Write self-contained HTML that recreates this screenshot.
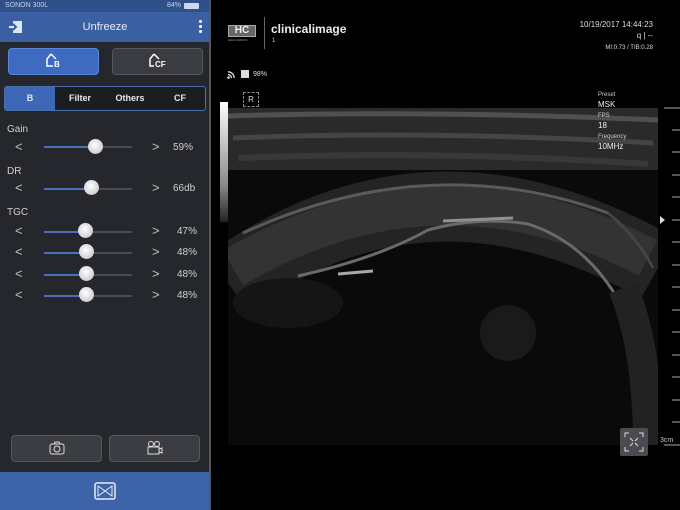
<!DOCTYPE html>
<html><head><meta charset="utf-8"><style>
*{margin:0;padding:0;box-sizing:border-box}
html,body{width:680px;height:510px;overflow:hidden}
body{background:#000;font-family:"Liberation Sans",sans-serif;position:relative}
.abs{position:absolute}
#left{left:0;top:0;width:210px;height:510px;background:#25272c}
.status{left:0;top:0;width:210px;height:12px;background:#2f4f88;color:#c9d2e6;font-size:7px;line-height:12px;padding-left:5px}
.title{left:0;top:12px;width:210px;height:30px;background:#3a60a3;color:#e6ecf6;font-size:11px;text-align:center;line-height:30px}
.btn{border-radius:4px;height:27px;top:48px}
.tabs{left:4px;top:86px;width:202px;height:25px;border:1px solid #4a6fae;border-radius:3px;background:#1c1d21;display:flex;font-size:9px;font-weight:bold;color:#e8e8e8}
.tabs div{flex:1;text-align:center;line-height:23px}
.lbl{color:#cfd0d4;font-size:10px;left:7px}
.ar{color:#bfc0c4;font-size:13px}
.val{color:#cfd0d4;font-size:10px}
.track{height:2px;background:#4a4c52;left:44px;width:88px}
.fill{height:2px;background:#4d6fb5;left:44px}
.knob{width:15px;height:15px;border-radius:50%;background:radial-gradient(circle at 45% 40%,#fff,#cfd0d4 70%,#9a9ca2);}
.bb{top:435px;height:27px;border-radius:4px;background:#3b3d42;border:1px solid #55575c}
</style></head><body>
<div id="left" class="abs"></div>
<div class="abs status">SONON 300L<span style="position:absolute;left:167px">84%</span><span style="position:absolute;left:184px;top:3px;width:15px;height:6px;background:#cfd8ea;border-radius:1px"></span></div>
<div class="abs title">Unfreeze
<svg class="abs" style="left:8px;top:7px" width="16" height="16" viewBox="0 0 16 16"><path d="M5 2h9v12H5z" fill="#dfe6f3"/><path d="M1 8h7M5 5l3 3-3 3" stroke="#3a60a3" stroke-width="2" fill="none"/><path d="M1 8h5" stroke="#dfe6f3" stroke-width="2"/></svg>
<span class="abs" style="left:199px;top:8px;width:3px;height:3px;background:#fff;border-radius:50%;box-shadow:0 5px 0 #fff,0 10px 0 #fff"></span></div>
<div class="abs btn" style="left:8px;width:91px;background:#3d6bc2;border:1px solid #5a86d6"></div>
<div class="abs btn" style="left:112px;width:91px;background:#3a3c41;border:1px solid #55575c"></div>
<svg class="abs" style="left:45px;top:53px" width="20" height="16" viewBox="0 0 20 16"><path d="M6 1L2 6v7h6" stroke="#fff" stroke-width="1.5" fill="none"/><path d="M6 1l5 5" stroke="#fff" stroke-width="1.5"/><text x="9" y="14" fill="#fff" font-size="8" font-weight="bold" font-family="Liberation Sans">B</text></svg>
<svg class="abs" style="left:148px;top:53px" width="24" height="16" viewBox="0 0 24 16"><path d="M6 1L2 6v7h4" stroke="#fff" stroke-width="1.5" fill="none"/><path d="M6 1l5 5" stroke="#fff" stroke-width="1.5"/><text x="7" y="14" fill="#fff" font-size="8" font-weight="bold" font-family="Liberation Sans">CF</text></svg>
<div class="abs tabs"><div style="background:#3d68b8;border-radius:2px 0 0 2px">B</div><div>Filter</div><div>Others</div><div>CF</div></div>

<div class="abs lbl" style="top:124px">Gain</div>
<div class="abs lbl" style="top:166px">DR</div>
<div class="abs lbl" style="top:207px">TGC</div>

<div class="abs ar" style="left:15px;top:139px">&lt;</div><div class="abs track" style="top:146px"></div><div class="abs fill" style="top:146px;width:52px"></div><div class="abs knob" style="left:88px;top:139px"></div><div class="abs ar" style="left:152px;top:139px">&gt;</div><div class="abs val" style="left:173px;top:142px">59%</div>
<div class="abs ar" style="left:15px;top:180px">&lt;</div><div class="abs track" style="top:188px"></div><div class="abs fill" style="top:188px;width:48px"></div><div class="abs knob" style="left:84px;top:180px"></div><div class="abs ar" style="left:152px;top:180px">&gt;</div><div class="abs val" style="left:173px;top:183px">66db</div>
<div class="abs ar" style="left:15px;top:223px">&lt;</div><div class="abs track" style="top:231px"></div><div class="abs fill" style="top:231px;width:42px"></div><div class="abs knob" style="left:78px;top:223px"></div><div class="abs ar" style="left:152px;top:223px">&gt;</div><div class="abs val" style="left:177px;top:226px">47%</div>
<div class="abs ar" style="left:15px;top:244px">&lt;</div><div class="abs track" style="top:252px"></div><div class="abs fill" style="top:252px;width:43px"></div><div class="abs knob" style="left:79px;top:244px"></div><div class="abs ar" style="left:152px;top:244px">&gt;</div><div class="abs val" style="left:177px;top:247px">48%</div>
<div class="abs ar" style="left:15px;top:266px">&lt;</div><div class="abs track" style="top:274px"></div><div class="abs fill" style="top:274px;width:43px"></div><div class="abs knob" style="left:79px;top:266px"></div><div class="abs ar" style="left:152px;top:266px">&gt;</div><div class="abs val" style="left:177px;top:269px">48%</div>
<div class="abs ar" style="left:15px;top:287px">&lt;</div><div class="abs track" style="top:295px"></div><div class="abs fill" style="top:295px;width:43px"></div><div class="abs knob" style="left:79px;top:287px"></div><div class="abs ar" style="left:152px;top:287px">&gt;</div><div class="abs val" style="left:177px;top:290px">48%</div>

<div class="abs bb" style="left:11px;width:91px"></div>
<div class="abs bb" style="left:109px;width:91px"></div>
<svg class="abs" style="left:49px;top:441px" width="16" height="14" viewBox="0 0 16 14"><rect x="1" y="3" width="14" height="10" rx="2" stroke="#ddd" fill="none"/><circle cx="8" cy="8" r="3" stroke="#ddd" fill="none"/><path d="M5 3l1-2h4l1 2" stroke="#ddd" fill="none"/></svg>
<svg class="abs" style="left:147px;top:440px" width="16" height="15" viewBox="0 0 16 15"><circle cx="4" cy="4" r="2.5" stroke="#ddd" fill="none"/><circle cx="10" cy="4" r="2.5" stroke="#ddd" fill="none"/><rect x="1" y="7" width="11" height="7" stroke="#ddd" fill="none"/><path d="M12 9l3-1v5l-3-1" stroke="#ddd" fill="none"/></svg>
<div class="abs" style="left:0;top:472px;width:210px;height:38px;background:#3d63a8"></div>
<svg class="abs" style="left:94px;top:482px" width="22" height="18" viewBox="0 0 22 18"><rect x="1" y="1" width="20" height="16" rx="2" stroke="#e6ecf6" stroke-width="1.5" fill="none"/><path d="M4 4l7 5-7 5zM18 4l-7 5 7 5z" stroke="#e6ecf6" fill="none"/></svg>
<div class="abs" style="left:209px;top:0;width:2px;height:510px;background:#55575c"></div>

<div class="abs" style="left:228px;top:25px;width:28px;height:12px;border:1px solid #aaa;background:#666;color:#eee;font-size:10px;font-weight:bold;line-height:10px;text-align:center">HC</div>
<div class="abs" style="left:228px;top:38px;font-size:3px;color:#999">HEALCERION</div>
<div class="abs" style="left:264px;top:17px;width:1px;height:32px;background:#666"></div>
<div class="abs" style="left:271px;top:22px;color:#eee;font-size:12px;font-weight:bold">clinicalimage</div>
<div class="abs" style="left:272px;top:38px;color:#ccc;font-size:6px">1</div>
<div class="abs" style="right:27px;top:19px;color:#ddd;font-size:8px;text-align:right;line-height:11px">10/19/2017 14:44:23<br>q | --<br><span style="font-size:6px">MI:0.73 / TIB:0.28</span></div>
<svg class="abs" style="left:227px;top:71px" width="8" height="8" viewBox="0 0 8 8"><circle cx="1.5" cy="6.5" r="1.3" fill="#ddd"/><path d="M1 3.5a3.5 3.5 0 0 1 3.5 3.5M1 0.8a6.2 6.2 0 0 1 6.2 6.2" stroke="#ddd" stroke-width="1.3" fill="none"/></svg>
<div class="abs" style="left:241px;top:70px;width:8px;height:8px;background:#ddd"></div>
<div class="abs" style="left:253px;top:71px;color:#ddd;font-size:7px">98%</div>
<div class="abs" style="left:243px;top:92px;width:16px;height:15px;border:1px dashed #888;color:#ddd;font-size:8px;text-align:center;line-height:13px">R</div>
<div class="abs" style="left:220px;top:102px;width:8px;height:120px;background:linear-gradient(#fff,#888 70%,#222)"></div>

<svg class="abs" style="left:228px;top:108px" width="430" height="337" viewBox="0 0 430 337">
<rect width="430" height="337" fill="#0a0a0a"/>
<rect width="430" height="62" fill="#2a2a2a"/>
<path d="M0 8 Q200 2 430 12" stroke="#505050" stroke-width="5" fill="none"/>
<path d="M5 30 Q200 22 425 35" stroke="#454545" stroke-width="5" fill="none"/>
<path d="M10 50 Q210 42 420 56" stroke="#383838" stroke-width="6" fill="none"/>
<path d="M0 175 Q200 30 430 160" stroke="#242424" stroke-width="70" fill="none"/>
<path d="M5 160 Q210 40 420 150" stroke="#333" stroke-width="40" fill="none"/>
<path d="M15 125 Q200 40 380 105" stroke="#5a5a5a" stroke-width="3" fill="none"/>
<path d="M380 105 Q410 130 425 160" stroke="#444" stroke-width="3" fill="none"/>
<path d="M70 168 Q150 150 200 122 Q250 108 300 116 Q360 135 395 200" stroke="#6a6a6a" stroke-width="3" fill="none"/>
<path d="M110 166 L145 163" stroke="#a8a8a8" stroke-width="3"/>
<path d="M215 113 L285 110" stroke="#909090" stroke-width="3"/>
<path d="M395 180 Q420 240 420 337" stroke="#222" stroke-width="30" fill="none"/>
<ellipse cx="280" cy="225" rx="28" ry="28" fill="#1a1a1a"/>
<ellipse cx="60" cy="195" rx="55" ry="25" fill="#151515"/>
</svg>

<svg class="abs" style="left:0;top:0" width="680" height="510">
<g stroke="#aaa"><line x1="664" y1="108" x2="680" y2="108"/><line x1="672" y1="130" x2="680" y2="130"/><line x1="672" y1="152" x2="680" y2="152"/><line x1="672" y1="175" x2="680" y2="175"/><line x1="672" y1="197" x2="680" y2="197"/><line x1="672" y1="220" x2="680" y2="220"/><line x1="672" y1="242" x2="680" y2="242"/><line x1="672" y1="265" x2="680" y2="265"/><line x1="672" y1="287" x2="680" y2="287"/><line x1="672" y1="310" x2="680" y2="310"/><line x1="672" y1="332" x2="680" y2="332"/><line x1="672" y1="355" x2="680" y2="355"/><line x1="672" y1="377" x2="680" y2="377"/><line x1="672" y1="400" x2="680" y2="400"/><line x1="672" y1="422" x2="680" y2="422"/><line x1="664" y1="445" x2="680" y2="445"/></g>
<path d="M660 216l5 4-5 4z" fill="#ddd"/>
<rect x="620" y="428" width="28" height="28" rx="2" fill="#4a4c52"/>
<path d="M625 437v-4h4M643 437v-4h-4M625 447v4h4M643 447v4h-4M630 438l3 3M638 438l-3 3M630 446l3-3M638 446l-3-3" stroke="#ddd" fill="none"/>
<text x="660" y="442" fill="#ccc" font-size="7" font-family="Liberation Sans">3cm</text>
</svg>
<div class="abs" style="left:598px;top:90px;color:#ccc;font-size:6px;line-height:10px">Preset<br><span style="font-size:8px;color:#eee">MSK</span><br>FPS<br><span style="font-size:8px;color:#eee">18</span><br>Frequency<br><span style="font-size:8px;color:#eee">10MHz</span></div>
</body></html>
